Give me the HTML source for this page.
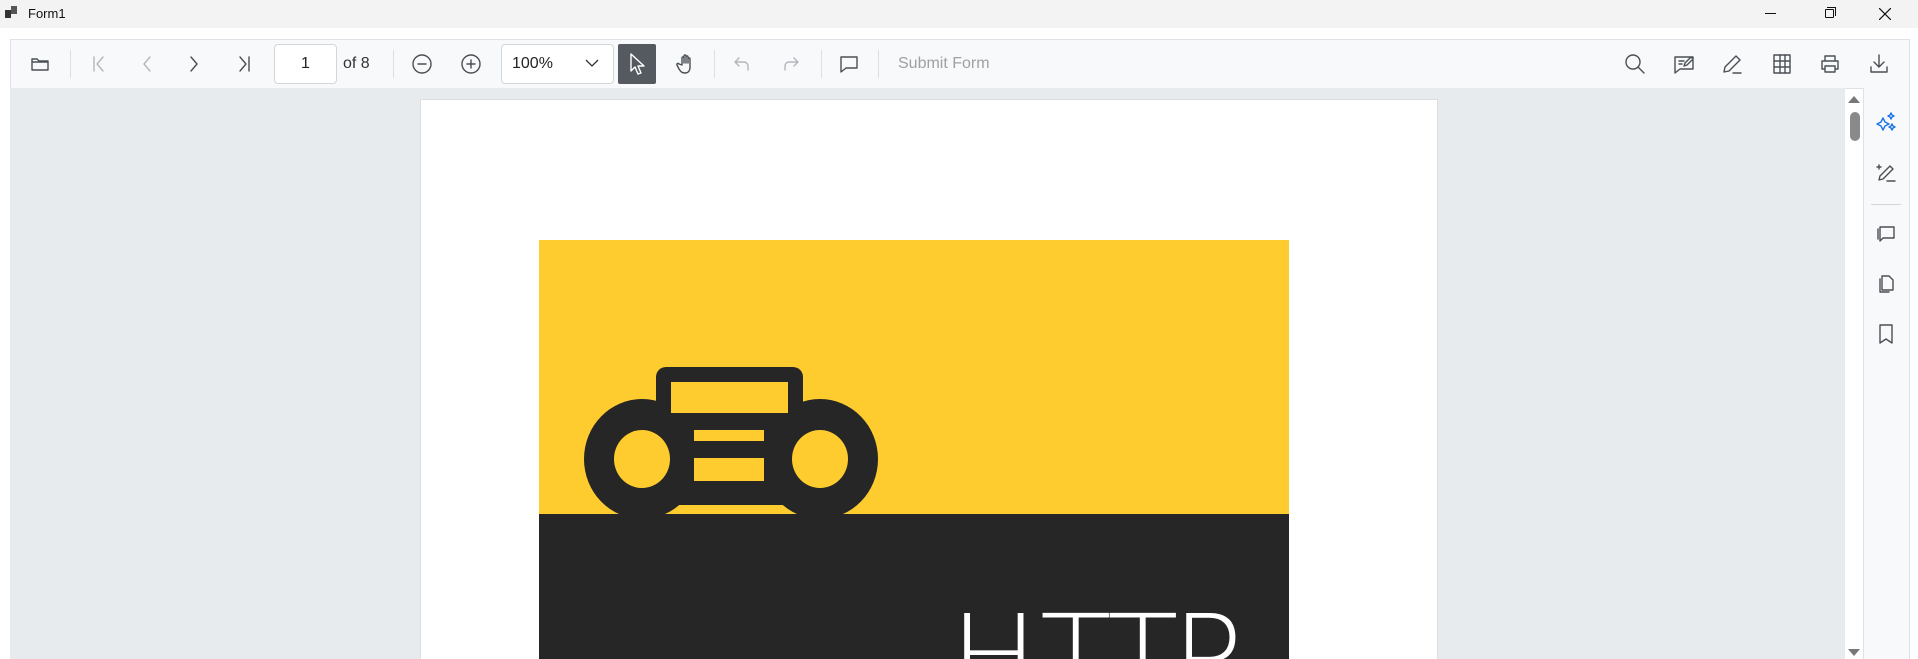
<!DOCTYPE html>
<html><head><meta charset="utf-8"><style>
*{margin:0;padding:0;box-sizing:border-box}
html,body{width:1918px;height:659px;overflow:hidden;background:#fff}
body{font-family:"Liberation Sans",sans-serif;position:relative}
.abs{position:absolute}
.ic{position:absolute;width:24px;height:24px}
.ic svg{width:24px;height:24px;fill:none;stroke:#4a4f55;stroke-width:1.4;stroke-linecap:round;stroke-linejoin:round}
.dis svg{stroke:#b3b7bc}
.sep{position:absolute;top:50px;width:1px;height:28px;background:#dcdfe3}
.L{position:absolute;top:85px;color:#fff;font-family:"DejaVu Sans",sans-serif;font-weight:200;font-size:117px;line-height:1;}
</style></head><body>
<div class="abs" style="left:0;top:0;width:1918px;height:28px;background:#f3f3f3"></div>
<div class="abs" style="left:5px;top:10px;width:6px;height:8px;background:#333"></div>
<div class="abs" style="left:11px;top:6px;width:6px;height:8px;background:#555"></div>
<div class="abs" style="left:28px;top:6px;font-size:13px;color:#111">Form1</div>
<div class="abs" style="left:1765px;top:13px;width:11px;height:1px;background:#111"></div>
<div class="abs" style="left:1825px;top:9px;width:9px;height:9px;border:1px solid #111;border-radius:1px"></div>
<div class="abs" style="left:1827px;top:7px;width:9px;height:9px;border-top:1px solid #111;border-right:1px solid #111"></div>
<svg class="abs" style="left:1879px;top:8px" width="12" height="12"><path d="M0 0L12 12M12 0L0 12" stroke="#111" stroke-width="1.2"/></svg>
<div class="abs" style="left:10px;top:39px;width:1900px;height:50px;background:#f8f9fa;border:1px solid #dfe2e6"></div>
<div class="abs" style="left:10px;top:88px;width:1835px;height:571px;background:#e8ebee"></div>
<div class="ic" style="left:28px;top:52px"><svg viewBox="0 0 24 24"><path d="M4 7v11h16V9H11L9 7H4zM4 10h16"/></svg></div>
<div class="sep" style="left:70px"></div>
<div class="ic dis" style="left:86px;top:52px"><svg viewBox="0 0 24 24"><path d="M8 5v14M17 5l-6 7 6 7"/></svg></div>
<div class="ic dis" style="left:135px;top:52px"><svg viewBox="0 0 24 24"><path d="M15 5l-6 7 6 7"/></svg></div>
<div class="ic" style="left:182px;top:52px"><svg viewBox="0 0 24 24"><path d="M9 5l6 7-6 7"/></svg></div>
<div class="ic" style="left:233px;top:52px"><svg viewBox="0 0 24 24"><path d="M7 5l6 7-6 7M16 5v14"/></svg></div>
<div class="abs" style="left:274px;top:44px;width:63px;height:40px;background:#fff;border:1px solid #d3d6da;border-radius:4px;font-size:16px;text-align:center;line-height:38px;color:#222">1</div>
<div class="abs" style="left:343px;top:55px;font-size:16px;color:#333">of 8</div>
<div class="sep" style="left:393px"></div>
<div class="ic" style="left:410px;top:52px"><svg viewBox="0 0 24 24"><circle cx="12" cy="12" r="9"/><path d="M8 12h8"/></svg></div>
<div class="ic" style="left:459px;top:52px"><svg viewBox="0 0 24 24"><circle cx="12" cy="12" r="9"/><path d="M8 12h8M12 8v8"/></svg></div>
<div class="abs" style="left:501px;top:44px;width:113px;height:40px;background:#fff;border:1px solid #d3d6da;border-radius:4px"></div>
<div class="abs" style="left:512px;top:55px;font-size:16px;color:#222">100%</div>
<svg class="abs" style="left:585px;top:58px" width="14" height="10"><path d="M1 2l6 6 6-6" fill="none" stroke="#333" stroke-width="1.3"/></svg>
<div class="abs" style="left:618px;top:44px;width:38px;height:40px;background:#555a60;border-radius:2px"></div>
<svg class="abs" style="left:628px;top:52px" width="18" height="24"><path d="M3 2v17l4-4 3 7 3-1-3-7h6z" fill="none" stroke="#fff" stroke-width="1.4" stroke-linejoin="round"/></svg>
<div class="ic" style="left:674px;top:52px"><svg viewBox="0 0 24 24"><path d="M8 13V6a1 1 0 012 0v5V4a1 1 0 012 0v7V5a1 1 0 012 0v6V7a1 1 0 012 0v8c0 4-2 6-5 6s-4-1-6-4l-2-4a1 1 0 012-1z"/></svg></div>
<div class="sep" style="left:714px"></div>
<div class="ic dis" style="left:730px;top:52px"><svg viewBox="0 0 24 24"><path d="M9 6L5 10l4 4M5 10h9a4 4 0 014 4v4"/></svg></div>
<div class="ic dis" style="left:779px;top:52px"><svg viewBox="0 0 24 24"><path d="M15 6l4 4-4 4M19 10h-9a4 4 0 00-4 4v4"/></svg></div>
<div class="sep" style="left:821px"></div>
<div class="ic" style="left:837px;top:52px"><svg viewBox="0 0 24 24"><path d="M4 5h16v11H9l-5 4z"/></svg></div>
<div class="sep" style="left:878px"></div>
<div class="abs" style="left:898px;top:55px;font-size:16px;color:#9da1a6">Submit Form</div>
<div class="ic" style="left:1623px;top:52px"><svg viewBox="0 0 24 24"><circle cx="10" cy="10" r="7"/><path d="M15 15l6 6"/></svg></div>
<div class="ic" style="left:1672px;top:52px"><svg viewBox="0 0 24 24"><path d="M3 5h18v12H8l-5 4zM7 9h5M7 12h3M12 14l1-3 6-6 2 2-6 6z"/></svg></div>
<div class="ic" style="left:1720px;top:52px"><svg viewBox="0 0 24 24"><path d="M4 20l1-5L16 4l4 4L9 19zM13 21h8"/></svg></div>
<div class="ic" style="left:1770px;top:52px"><svg viewBox="0 0 24 24"><rect x="4" y="3" width="16" height="18"/><path d="M10 3v18M15 3v18M4 9h16M4 15h16"/></svg></div>
<div class="ic" style="left:1818px;top:52px"><svg viewBox="0 0 24 24"><path d="M7 9V4h10v5M7 17H4V9h16v8h-3M7 14h10v6H7z"/></svg></div>
<div class="ic" style="left:1867px;top:52px"><svg viewBox="0 0 24 24"><path d="M12 3v12M7 10l5 5 5-5M4 15v5h16v-5"/></svg></div>
<div class="abs" style="left:1845px;top:89px;width:18px;height:570px;background:#fff"></div>
<svg class="abs" style="left:1848px;top:94px" width="12" height="10"><path d="M0 9L6 2l6 7z" fill="#777"/></svg>
<div class="abs" style="left:1850px;top:112px;width:10px;height:29px;background:#8a8a8a;border-radius:5px"></div>
<svg class="abs" style="left:1848px;top:648px" width="12" height="10"><path d="M0 1l6 7 6-7z" fill="#777"/></svg>
<div class="abs" style="left:1863px;top:88px;width:47px;height:571px;background:#f8f9fa;border-left:1px solid #dfe2e6;border-right:1px solid #dfe2e6"></div>
<div class="ic" style="left:1874px;top:110px"><svg viewBox="0 0 24 24" style="stroke:#1a73e8"><path d="M9 8l2 4 4 2-4 2-2 4-2-4-4-2 4-2zM17 3l1 2 2 1-2 1-1 2-1-2-2-1 2-1zM18 14l1 2 2 1-2 1-1 2-1-2-2-1 2-1z"/></svg></div>
<div class="ic" style="left:1874px;top:160px"><svg viewBox="0 0 24 24"><path d="M5 20l1-4L16 6l3 3L9 19zM13 21h8M5 5v4M3 7h4"/></svg></div>
<div class="abs" style="left:1871px;top:204px;width:30px;height:1px;background:#d3d6da"></div>
<div class="ic" style="left:1874px;top:222px"><svg viewBox="0 0 24 24"><path d="M6 5h14v11H9l-3 3zM4 7v10"/></svg></div>
<div class="ic" style="left:1874px;top:272px"><svg viewBox="0 0 24 24"><path d="M8 4h7l4 4v10H8zM6 7v13h9"/></svg></div>
<div class="ic" style="left:1874px;top:322px"><svg viewBox="0 0 24 24"><path d="M6 3h12v18l-6-4-6 4z"/></svg></div>
<div class="abs" style="left:420px;top:99px;width:1018px;height:560px;background:#fff;border:1px solid #dcdfe2;border-bottom:none"></div>
<div class="abs" style="left:539px;top:240px;width:750px;height:275px;background:#fecc2f"></div>
<svg class="abs" style="left:539px;top:240px" width="750" height="276">
<g fill="#262626">
<rect x="117" y="127" width="147" height="60" rx="10"/>
<ellipse cx="103" cy="219" rx="58" ry="60"/>
<ellipse cx="281" cy="219" rx="58" ry="60"/>
<rect x="103" y="173" width="178" height="92"/>
</g>
<rect x="132" y="142" width="117" height="31" fill="#fecc2f"/>
<ellipse cx="103" cy="219" rx="28" ry="29" fill="#fecc2f"/>
<ellipse cx="281" cy="219" rx="28" ry="29" fill="#fecc2f"/>
<rect x="155" y="190" width="70" height="11" fill="#fecc2f"/>
<rect x="155" y="218" width="70" height="23" fill="#fecc2f"/>
</svg>
<div class="abs" style="left:539px;top:514px;width:750px;height:145px;background:#262626;overflow:hidden">
<div class="L" style="left:411px">H</div>
<div class="L" style="left:501px">T</div>
<div class="L" style="left:568px">T</div>
<div class="L" style="left:633px">P</div>
</div>
</body></html>
